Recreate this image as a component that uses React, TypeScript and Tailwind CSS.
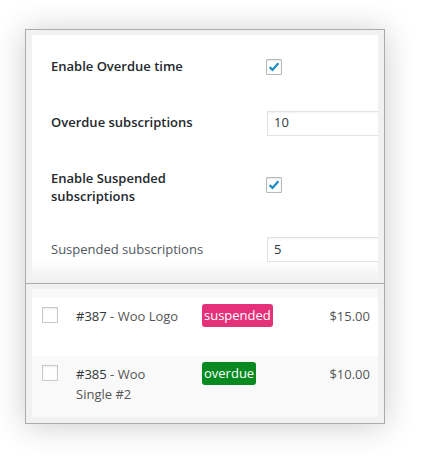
import React from 'react';

const font = { fontFamily: '"Open Sans", "Noto Sans", sans-serif' };

const Check: React.FC<{ className?: string }> = ({ className = '' }) => (
  <span className={`flex h-[16px] w-[16px] shrink-0 items-center justify-center rounded-[1px] border border-[#b4b9be] bg-white shadow-[inset_0_1px_2px_rgba(0,0,0,0.1)] ${className}`}>
    <svg viewBox="0 0 16 16" className="h-[14px] w-[14px]">
      <path d="M3 8.2 L6.3 11.3 L13 3.8" fill="none" stroke="#1e8cbe" strokeWidth="2.6" strokeLinejoin="miter" />
    </svg>
  </span>
);

const NumberInput: React.FC<{ value: string }> = ({ value }) => (
  <div className="flex h-[25px] w-[140px] shrink-0 items-center border border-[#e2e2e2] bg-white pl-[6px] text-[13px] text-[#32373c] shadow-[inset_0_1px_2px_rgba(0,0,0,0.05)]">
    {value}
  </div>
);

const rows = [
  { id: '#387', name: 'Woo Logo', status: 'suspended', color: 'bg-[#e5317a]', price: '$15.00', bg: 'bg-white', h: 'h-[58px]' },
  { id: '#385', name: 'Woo Single #2', status: 'overdue', color: 'bg-[#068a1f]', price: '$10.00', bg: 'bg-[#f9f9f9]', h: 'h-[61px]' },
];

const App: React.FC = () => {
  return (
    <div className="h-[462px] w-[422px] overflow-hidden bg-white pt-[29px] pl-[25px]" style={font}>
      <div className="w-[360px] shadow-[0_2px_30px_rgba(0,0,0,0.2)]">
        {/* Settings panel */}
        <div className="border border-b-0 border-[#ababab] bg-[#f1f1f1] px-[6px] pt-[5px] pb-[4px]">
          <div className="overflow-hidden bg-white pl-[19px]">
            <div className="flex h-[64px] items-center">
              <div className="w-[215px] shrink-0 text-[13px] font-semibold text-[#23282d]">Enable Overdue time</div>
              <Check />
            </div>
            <div className="flex h-[48px] items-center">
              <div className="w-[216px] shrink-0 text-[13px] font-semibold text-[#23282d]">Overdue subscriptions</div>
              <NumberInput value="10" />
            </div>
            <div className="flex h-[80px] items-center">
              <div className="w-[215px] shrink-0 pr-[80px] text-[13px] font-semibold leading-[18px] text-[#23282d]">
                Enable Suspended subscriptions
              </div>
              <Check className="-mt-[5px]" />
            </div>
            <div className="-ml-[19px] flex h-[52px] items-start bg-gradient-to-b from-white from-[65%] to-[#f1f1f1] pt-[10px] pl-[19px]">
              <div className="flex h-[25px] w-[216px] shrink-0 items-center text-[13px] text-[#50575e]">Suspended subscriptions</div>
              <NumberInput value="5" />
            </div>
          </div>
        </div>

        {/* Subscriptions list */}
        <div className="border border-[#ababab] bg-[#f1f1f1] px-[6px] pt-[5px] pb-[6px]">
          <div className="bg-[#f9f9f9] pt-[9px]">
            {rows.map((r) => (
              <div key={r.id} className={`flex ${r.h} ${r.bg} pl-[10px] pr-[8px] pt-[9px] text-[13px] leading-[20px] text-[#555]`}>
                <span className="h-[16px] w-[16px] shrink-0 border border-[#c7cacd] bg-white shadow-[inset_0_1px_2px_rgba(0,0,0,0.08)]" />
                <div className="ml-[18px] -mt-[1px] w-[107px] shrink-0">
                  <span className="text-[#32373c]">{r.id}</span> - {r.name}
                </div>
                <div className="ml-[19px] -mt-[3px]">
                  <span className={`inline-block rounded-[3px] ${r.color} px-[2px] py-[1px] text-[13px] leading-[21px] text-white`}>
                    {r.status}
                  </span>
                </div>
                <div className="ml-auto -mt-[1px]">{r.price}</div>
              </div>
            ))}
          </div>
        </div>
      </div>
    </div>
  );
};

export default App;
